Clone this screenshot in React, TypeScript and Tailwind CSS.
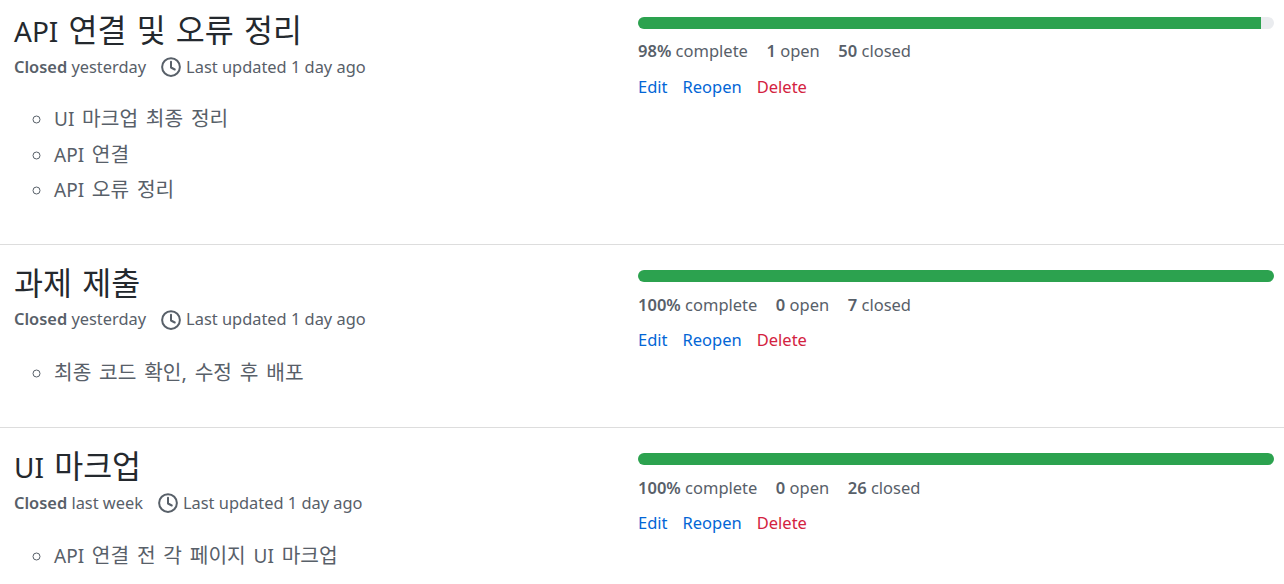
import React from "react";

const Clock = () => (
  <svg viewBox="0 0 16 16" width="20" height="20" fill="none" stroke="#586069" strokeWidth="1.6" className="shrink-0">
    <circle cx="8" cy="8" r="7.1" />
    <path d="M8 3.8V8.4L11 10" strokeLinecap="round" strokeLinejoin="round" />
  </svg>
);

type Row = {
  title: React.ReactNode;
  id: string;
  closed: string;
  items: React.ReactNode[];
  pct: number;
  open: number;
  done: number;
  first?: boolean;
};

const L = ({ c }: { c: string }) => <span className="text-[28px] leading-none">{c}</span>;
const S = ({ c }: { c: string }) => <span className="text-[19px] leading-none">{c}</span>;

const rows: Row[] = [
  {
    id: "a",
    title: <><L c="API" /> 연결 및 오류 정리</>,
    closed: "yesterday",
    items: [<><S c="UI" /> 마크업 최종 정리</>, <><S c="API" /> 연결</>, <><S c="API" /> 오류 정리</>],
    pct: 98,
    open: 1,
    done: 50,
    first: true,
  },
  { id: "b", title: "과제 제출", closed: "yesterday", items: ["최종 코드 확인, 수정 후 배포"], pct: 100, open: 0, done: 7 },
  {
    id: "c",
    title: <><L c="UI" /> 마크업</>,
    closed: "last week",
    items: [<><S c="API" /> 연결 전 각 페이지 <S c="UI" /> 마크업</>],
    pct: 100,
    open: 0,
    done: 26,
  },
];

function Milestone({ r }: { r: Row }) {
  return (
    <div className="flex border-b border-[#dddddd] last:border-b-0 pl-[14px] pr-[10px] shrink-0">
      <div className="w-[624px] shrink-0">
        <h2 className={`text-[31.5px] leading-[40px] font-normal text-[#24292e] [word-spacing:2px] ${r.first ? "mt-[10px]" : "mt-[18px]"}`}>{r.title}</h2>
        <div className="flex items-center h-[24px] mt-[5px] text-[#586069] text-[16.4px]">
          <span><b className="font-semibold">Closed</b> {r.closed}</span>
          <span className="ml-[15px] mr-[5px]"><Clock /></span>
          <span>Last updated 1 day ago</span>
        </div>
        <ul className={`list-[circle] pl-[40px] text-[#586069] text-[20.3px] [word-spacing:2.5px] leading-[35.5px] marker:text-[#586069] ${r.first ? "mt-[22px] pb-[36px]" : "mt-[23px] pb-[37px]"}`}>
          {r.items.map((i, n) => (
            <li key={n}>{i}</li>
          ))}
        </ul>
      </div>
      <div className="flex-1 min-w-0">
        <div className={`h-[12px] rounded-full bg-[#eaecef] overflow-hidden ${r.first ? "mt-[17px]" : "mt-[25px]"}`}>
          <div className="h-full bg-[#2ca24f]" style={{ width: `${r.pct}%` }} />
        </div>
        <div className={`flex gap-[18.5px] text-[#586069] text-[16.5px] leading-[24px] ${r.first ? "mt-[10px]" : "mt-[11px]"}`}>
          <span><b className="font-semibold">{r.pct}%</b> complete</span>
          <span><b className="font-semibold">{r.open}</b> open</span>
          <span><b className="font-semibold">{r.done}</b> closed</span>
        </div>
        <div className={`flex gap-[15px] text-[16.5px] leading-[24px] ${r.first ? "mt-[12px]" : "mt-[11px]"}`}>
          <a className="text-[#0366d6]">Edit</a>
          <a className="text-[#0366d6]">Reopen</a>
          <a className="text-[#d32240]">Delete</a>
        </div>
      </div>
    </div>
  );
}

export default function App() {
  return (
    <div className="h-[584px] w-[1284px] overflow-hidden bg-white font-['Noto_Sans','Noto_Sans_CJK_KR',sans-serif] flex flex-col">
      {rows.map((r) => (
        <Milestone key={r.id} r={r} />
      ))}
    </div>
  );
}
